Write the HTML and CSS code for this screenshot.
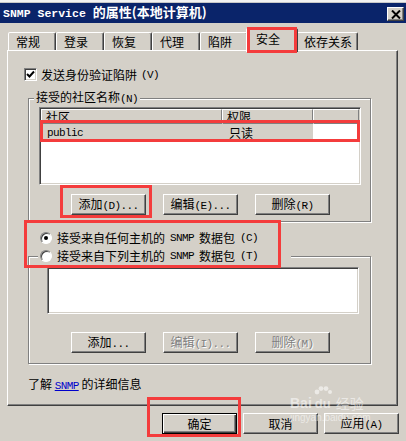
FILE: index.html
```html
<!DOCTYPE html>
<html lang="zh-CN">
<head>
    <meta charset="UTF-8">
    <meta name="viewport" content="width=device-width, initial-scale=1.0">
    <title>SNMP Service 的属性(本地计算机)</title>
    <link rel="stylesheet" href="styles.css">
</head>
<body>
    <div class="top-strip"></div>

    <div class="titlebar">
        <span class="title"><span class="title-lat">SNMP Service </span>的属性(本地计算机)</span>
        <span class="close-btn">
            <svg width="10" height="9" viewBox="0 0 10 9">
                <path d="M1 0.5 L9 8.5 M9 0.5 L1 8.5" stroke="#000" stroke-width="2" fill="none"/>
            </svg>
        </span>
    </div>

    <div class="tabs">
        <div class="tab">常规</div>
        <div class="tab">登录</div>
        <div class="tab">恢复</div>
        <div class="tab">代理</div>
        <div class="tab">陷阱</div>
        <div class="tab active">安全</div>
        <div class="tab">依存关系</div>
    </div>

    <div class="panel">
        <div class="check-row">
            <span class="checkbox">
                <svg width="9" height="9" viewBox="0 0 9 9">
                    <path d="M1 4 L3.5 6.5 L8 1.5" stroke="#000" stroke-width="2" fill="none"/>
                </svg>
            </span>
            发送身份验证陷阱<span class="lat">(V)</span>
        </div>

        <fieldset class="group group-community">
            <legend>接受的社区名称<span class="lat">(N)</span></legend>
            <div class="listbox list-community">
                <div class="list-head">
                    <span class="col-name">社区</span>
                    <span class="col-right">权限</span>
                    <span class="col-fill"></span>
                </div>
                <div class="list-row">
                    <span class="col-name lat">public</span>
                    <span class="col-right">只读</span>
                </div>
            </div>
            <div class="btn-row">
                <button>添加<span class="lat">(D)...</span></button>
                <button>编辑<span class="lat">(E)...</span></button>
                <button>删除<span class="lat">(R)</span></button>
            </div>
        </fieldset>

        <div class="radio-row first-radio">
            <span class="radio checked"></span>
            接受来自任何主机的<span class="lat"> SNMP </span>数据包<span class="lat">(C)</span>
        </div>

        <fieldset class="group group-hosts">
            <legend class="radio-row">
                <span class="radio"></span>
                接受来自下列主机的<span class="lat"> SNMP </span>数据包<span class="lat">(T)</span>
            </legend>
            <div class="listbox list-hosts"></div>
            <div class="btn-row">
                <button>添加<span class="lat">...</span></button>
                <button disabled>编辑<span class="lat">(I)...</span></button>
                <button disabled>删除<span class="lat">(M)</span></button>
            </div>
        </fieldset>

        <p class="info">了解 <a class="link lat" href="#">SNMP</a> 的详细信息</p>
    </div>

    <div class="footer">
        <button class="default">确定</button>
        <button>取消</button>
        <button>应用<span class="lat">(A)</span></button>
    </div>

    <!-- 红框标注 -->
    <div class="mark mark-tab"></div>
    <div class="mark mark-row"></div>
    <div class="mark mark-add"></div>
    <div class="mark mark-radio"></div>
    <div class="mark mark-ok"></div>

    <!-- 水印 -->
    <div class="watermark">
        <div class="wm-line">
            <span class="wm-bai">Bai</span>
            <span class="wm-paw">
                <svg width="18" height="10" viewBox="0 0 18 10">
                    <circle cx="3" cy="6" r="2.4"/>
                    <circle cx="7" cy="2.6" r="2.4"/>
                    <circle cx="12" cy="2.6" r="2.4"/>
                    <circle cx="16" cy="6" r="2"/>
                </svg>
                <span class="wm-du">du</span>
            </span>
            <span class="wm-jy">经验</span>
        </div>
        <div class="wm-url">jingyan.baidu.com</div>
    </div>
</body>
</html>
```

FILE: styles.css
```css
* {
    box-sizing: border-box;
}
body {
    margin: 0;
    width: 406px;
    height: 441px;
    overflow: hidden;
    position: relative;
    background-color: #d4d0c8;
    font-family: "Noto Sans CJK SC", sans-serif;
    font-size: 12px;
    line-height: 14px;
    color: #000;
}
.lat {
    font-family: "Liberation Mono", monospace;
    font-size: 11px;
    letter-spacing: -0.6px;
}
.top-strip {
    height: 3px;
    background-color: #f2f2f2;
    border-bottom: 1px solid #c8c8c8;
}
.titlebar {
    height: 20px;
    background-color: #0a246a;
    color: white;
    display: flex;
    align-items: center;
    justify-content: space-between;
    padding: 0 2px 0 3px;
}
.title {
    font-size: 13px;
    font-weight: bold;
    white-space: nowrap;
}
.title-lat {
    font-family: "Liberation Mono", monospace;
    font-size: 11.5px;
    white-space: pre;
}
.close-btn {
    width: 17px;
    height: 14px;
    background-color: #d4d0c8;
    border: 1px solid;
    border-color: #fff #404040 #404040 #fff;
    box-shadow: inset -1px -1px 0 #808080;
    display: flex;
    align-items: center;
    justify-content: center;
    margin-top: 2px;
}

/* 选项卡 */
.tabs {
    height: 27px;
    padding: 5px 0 0 8px;
    display: flex;
    align-items: flex-start;
    position: relative;
    z-index: 1;
}
.tab {
    min-width: 48px;
    height: 18px;
    margin-top: 4px;
    padding: 2px 5px 0 7px;
    border: 1px solid;
    border-bottom: none;
    border-color: #fff #404040 transparent #fff;
    border-radius: 2px 2px 0 0;
    box-shadow: inset -1px 0 0 #808080;
    background-color: #d4d0c8;
    white-space: nowrap;
}
.tab.active {
    min-width: 52px;
    height: 24px;
    margin: 0 -2px;
    padding: 3px 5px 0 9px;
    position: relative;
    z-index: 2;
}

/* 属性页 */
.panel {
    width: 391px;
    height: 356px;
    margin-left: 7px;
    padding: 17px 28px 0 20px;
    border: 1px solid;
    border-color: #fff #404040 #404040 #fff;
    box-shadow: inset -1px -1px 0 #808080;
}
.check-row {
    height: 13px;
    margin-left: -4px;
    display: flex;
    align-items: center;
    gap: 4px;
}
.checkbox {
    width: 13px;
    height: 13px;
    background-color: #fff;
    border: 1px solid;
    border-color: #808080 #fff #fff #808080;
    box-shadow: inset 1px 1px 0 #404040, inset -1px -1px 0 #d4d0c8;
    display: flex;
    align-items: center;
    justify-content: center;
}
.group {
    width: 343px;
    margin: 0;
    border: 1px solid #808080;
    box-shadow: inset 1px 1px 0 #fff, 1px 1px 0 #fff;
}
.group legend {
    padding: 0 2px;
    background-color: #d4d0c8;
    line-height: 14px;
}
.group-community {
    margin-top: 9px;
    padding: 1px 9px 6px 5px;
}
.listbox {
    background-color: #fff;
    border: 1px solid;
    border-color: #808080 #fff #fff #808080;
    box-shadow: inset 1px 1px 0 #404040, inset -1px -1px 0 #d4d0c8;
    padding: 1px;
}
.list-community {
    width: 322px;
    height: 78px;
    margin-left: 5px;
}
.list-head,
.list-row {
    display: flex;
}
.list-head span {
    height: 15px;
    background-color: #d4d0c8;
    border-top: 1px solid #fff;
    border-left: 1px solid #fff;
    border-right: 1px solid #808080;
    border-bottom: 1px solid #808080;
    padding-left: 4px;
    line-height: 13px;
}
.col-name {
    width: 181px;
}
.col-right {
    width: 91px;
}
.col-fill {
    flex: 1;
}
.list-row {
    height: 18px;
    align-items: center;
}
.list-row span {
    height: 18px;
    line-height: 18px;
    background-color: #d4d0c8;
}
.list-row .col-name {
    padding-left: 6px;
}
.list-row .col-right {
    padding-left: 7px;
}
.btn-row {
    display: flex;
    gap: 17px;
    margin-top: 9px;
}
.group-community .btn-row {
    padding-left: 37px;
}
button {
    width: 75px;
    height: 21px;
    padding: 0;
    font-family: inherit;
    font-size: 12px;
    line-height: 14px;
    color: #000;
    background-color: #d4d0c8;
    border: 1px solid;
    border-color: #fff #404040 #404040 #fff;
    box-shadow: inset -1px -1px 0 #808080;
    white-space: nowrap;
}
button:disabled {
    color: #808080;
    text-shadow: 1px 1px 0 #fff;
}
button.default {
    border: 1px solid #000;
    box-shadow: inset 1px 1px 0 #fff, inset -1px -1px 0 #404040, inset -2px -2px 0 #808080;
}

/* 单选 */
.radio-row {
    height: 18px;
    display: flex;
    align-items: center;
    gap: 5px;
    white-space: nowrap;
}
.first-radio {
    margin-top: 7px;
    padding-left: 12px;
}
.radio {
    width: 12px;
    height: 12px;
    border-radius: 50%;
    background-color: #fff;
    border: 1px solid;
    border-color: #808080 #fff #fff #808080;
    box-shadow: inset 1px 1px 0 #404040;
    display: flex;
    align-items: center;
    justify-content: center;
}
.radio.checked::after {
    content: "";
    width: 4px;
    height: 4px;
    border-radius: 50%;
    background-color: #000;
}
.group-hosts {
    padding: 2px 11px 10px 9px;
}
.group-hosts legend.radio-row {
    width: 253px;
    height: 18px;
    padding: 0 0 0 2px;
    line-height: 18px;
}
.list-hosts {
    width: 312px;
    height: 47px;
    margin-left: 9px;
}
.group-hosts .btn-row {
    margin-top: 18px;
    padding-left: 33px;
}
.info {
    margin: 13px 0 0;
    white-space: nowrap;
}
.link {
    color: #0000cc;
    text-decoration: underline;
}

/* 底部按钮 */
.footer {
    display: flex;
    justify-content: flex-end;
    gap: 6px;
    padding: 7px 7px 0 0;
}

/* 标注 */
.mark {
    position: absolute;
    border: 3px solid #f43c3c;
    z-index: 5;
}
.mark-tab {
    left: 247px;
    top: 27px;
    width: 50px;
    height: 26px;
}
.mark-row {
    left: 40px;
    top: 120px;
    width: 320px;
    height: 22px;
}
.mark-add {
    left: 60px;
    top: 185px;
    width: 92px;
    height: 33px;
}
.mark-radio {
    left: 24px;
    top: 220px;
    width: 257px;
    height: 48px;
}
.mark-ok {
    left: 147px;
    top: 397px;
    width: 94px;
    height: 40px;
}

/* 水印 */
.watermark {
    position: absolute;
    left: 290px;
    top: 386px;
    z-index: 4;
    color: rgba(255, 255, 255, 0.55);
    font-family: "Liberation Sans", Arial, sans-serif;
    pointer-events: none;
}
.wm-line {
    display: flex;
    align-items: flex-end;
    height: 24px;
}
.wm-bai {
    font-size: 14px;
    font-weight: bold;
    line-height: 14px;
}
.wm-paw {
    display: flex;
    flex-direction: column;
    align-items: center;
    margin: 0 4px 0 2px;
    fill: rgba(255, 255, 255, 0.55);
}
.wm-du {
    font-size: 13px;
    font-weight: bold;
    line-height: 13px;
    margin-top: 1px;
}
.wm-jy {
    font-family: "Noto Sans CJK SC", sans-serif;
    font-size: 14px;
    line-height: 14px;
}
.wm-url {
    font-size: 10px;
    line-height: 11px;
    margin-top: 2px;
}
```
